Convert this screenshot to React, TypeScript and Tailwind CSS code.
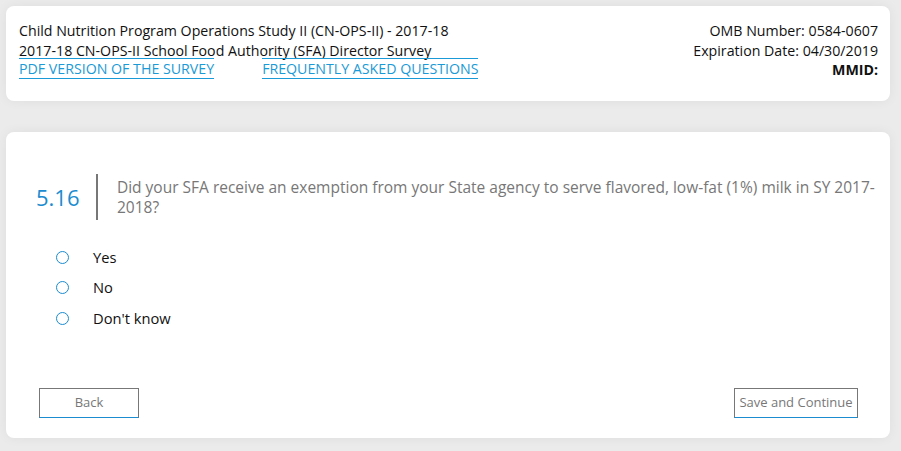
import { useState } from "react";

const options = ["Yes", "No", "Don't know"];

export default function App() {
  const [answer, setAnswer] = useState("");

  return (
    <main
      className="min-h-[451px] w-[901px] bg-[#ebebeb] pt-[6px] pl-[6px] pr-[11px] pb-[13px]"
      style={{ fontFamily: "'Open Sans', 'Noto Sans', sans-serif" }}
    >
      <header className="flex h-[95px] justify-between rounded-lg bg-white pl-[13px] pr-[12px] pt-[15px] text-[14.2px] leading-[19.5px] text-[#111] shadow-[0_0_12px_rgba(0,0,0,0.06)]">
        <div>
          <div>Child Nutrition Program Operations Study II (CN-OPS-II) - 2017-18</div>
          <div>2017-18 CN-OPS-II School Food Authority (SFA) Director Survey</div>
          <div className="flex gap-[48px]">
            <a className="-mt-[2px] border-y border-[#1a9ad6] leading-[19px] text-[#1a9ad6]">
              PDF VERSION OF THE SURVEY
            </a>
            <a className="-mt-[2px] border-y border-[#1a9ad6] leading-[19px] text-[#1a9ad6]">
              FREQUENTLY ASKED QUESTIONS
            </a>
          </div>
        </div>
        <div className="text-right">
          <div>OMB Number: 0584-0607</div>
          <div>Expiration Date: 04/30/2019</div>
          <div className="font-bold">MMID:</div>
        </div>
      </header>

      <section className="mt-[31px] flex h-[306px] flex-col rounded-lg bg-white shadow-[0_0_12px_rgba(0,0,0,0.06)]">
        <div className="flex items-center pl-[30px] pr-[12px] pt-[42px]">
          <div className="w-[63px] text-[22px] text-[#1a8ccf]">5.16</div>
          <div className="mr-[19px] h-[46px] w-[2px] shrink-0 bg-[#777]" />
          <p className="text-[15.5px] leading-[20px] text-[#777]">
            Did your SFA receive an exemption from your State agency to serve flavored, low-fat (1%) milk in SY 2017-2018?
          </p>
        </div>

        <div className="mt-[27px] flex flex-col gap-[10.5px] pl-[50px]">
          {options.map((o) => (
            <label key={o} className="flex h-[20px] items-center text-[14.7px] text-[#111]">
              <span className="flex w-[37px]">
                <span
                  onClick={() => setAnswer(o)}
                  className="flex h-[13px] w-[13px] items-center justify-center rounded-full border border-[#1a8ccf]"
                >
                  {answer === o && <span className="h-[7px] w-[7px] rounded-full bg-[#1a8ccf]" />}
                </span>
              </span>
              {o}
            </label>
          ))}
        </div>

        <div className="mt-auto mb-[20px] flex justify-between pl-[33px] pr-[32px]">
          <button className="h-[30px] w-[100px] border border-[#777] border-b-[#1a8ccf] text-[13px] text-[#777]">
            Back
          </button>
          <button className="h-[30px] w-[124px] border border-[#777] border-b-[#1a8ccf] text-[13px] text-[#777]">
            Save and Continue
          </button>
        </div>
      </section>
    </main>
  );
}
